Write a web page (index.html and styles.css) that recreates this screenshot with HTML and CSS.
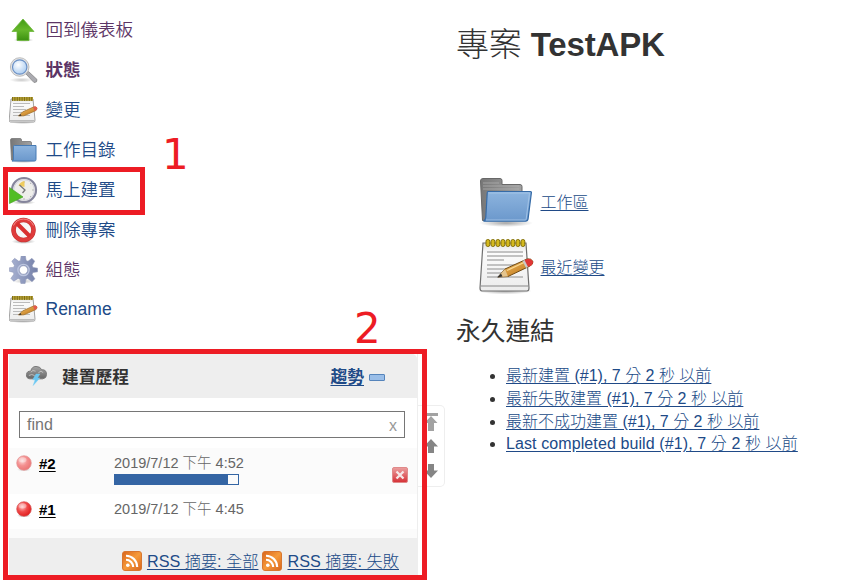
FILE: index.html
```html
<!DOCTYPE html>
<html lang="zh-Hant">
<head>
<meta charset="utf-8">
<title>TestAPK</title>
<link rel="stylesheet" href="styles.css">
</head>
<body>
<svg class="defs" width="0" height="0">
  <defs>
    <linearGradient id="gGreen" x2="0" y2="1"><stop stop-color="#3f9a14"/><stop offset=".5" stop-color="#66b72b"/><stop offset="1" stop-color="#3c9111"/></linearGradient>
    <linearGradient id="gBlue" x2="0" y2="1"><stop stop-color="#8db4de"/><stop offset="1" stop-color="#6b98cc"/></linearGradient>
    <linearGradient id="gGray" x2="1" y2="0"><stop stop-color="#777"/><stop offset="1" stop-color="#a2a2a2"/></linearGradient>
    <linearGradient id="gPaper" x2="0" y2="1"><stop stop-color="#e2e2e2"/><stop offset=".2" stop-color="#fbfbfb"/><stop offset="1" stop-color="#ececec"/></linearGradient>
    <linearGradient id="gPen" x2="1" y2="1"><stop stop-color="#f6c66e"/><stop offset="1" stop-color="#b86c0e"/></linearGradient>
    <linearGradient id="gGear" x2="1" y2="0"><stop stop-color="#a9b3d3"/><stop offset="1" stop-color="#7480a8"/></linearGradient>
    <linearGradient id="gRss" x2="1" y2="1"><stop stop-color="#d9641b"/><stop offset=".5" stop-color="#f59a3a"/><stop offset="1" stop-color="#d9641b"/></linearGradient>
    <linearGradient id="gStop" x2="0" y2="1"><stop stop-color="#eba0a0"/><stop offset="1" stop-color="#d62f35"/></linearGradient>
    <linearGradient id="gCloud" x2="0" y2="1"><stop stop-color="#a5a5a5"/><stop offset="1" stop-color="#666"/></linearGradient>
    <radialGradient id="gLens" cx=".4" cy=".35" r=".7"><stop stop-color="#fff"/><stop offset="1" stop-color="#a8cbf1"/></radialGradient>
    <radialGradient id="gBall" cx=".38" cy=".35" r=".68"><stop stop-color="#ffc4c4"/><stop offset=".5" stop-color="#f04a4a"/><stop offset="1" stop-color="#e01c1c"/></radialGradient>
    <radialGradient id="gShade"><stop stop-color="#000" stop-opacity=".35"/><stop offset="1" stop-color="#000" stop-opacity="0"/></radialGradient>
    <symbol id="folder" viewBox="0 0 56 56">
      <ellipse cx="28" cy="48" rx="27" ry="4" fill="url(#gShade)"/>
      <path d="M2.500 6q0-2.500 2.500-2.500h17q2 0 2 2v4h18q2 0 2 2v34H4.500z" fill="url(#gGray)" stroke="#686868"/>
      <path d="M5 8h16M5 11h36M5 14h36" stroke="#b4b4b4" stroke-width=".7"/>
      <path d="M10 16.500h42.500q1 0 .9 1.200l-3.300 26q-.3 2.500-2.500 2.500H5.500q2-1 2.300-4l1.400-24q0-1.700.8-1.700z" fill="url(#gBlue)" stroke="#366ba7" stroke-width="1.200"/>
      <path d="M10.500 18h41l-3.300 26q-.2 1-1 1H8" fill="none" stroke="#a5c5e8" stroke-width=".9"/>
    </symbol>
    <symbol id="folder-small" viewBox="0 0 28 28">
      <ellipse cx="14" cy="25" rx="14" ry="2" fill="url(#gShade)"/>
      <path d="M1 4q0-1.500 1.500-1.500h8Q12 2.500 12 4v1.500h8.500q1.500 0 1.500 1.500v17H2z" fill="url(#gGray)" stroke="#777" stroke-width=".8"/>
      <path d="M5 9.500h21.500v14q0 1.500-1.500 1.500H2.500q1.500-.5 1.500-2v-12.500q0-1 1-1z" fill="url(#gBlue)" stroke="#477bb5"/>
    </symbol>
    <symbol id="notepad" viewBox="0 0 56 56">
      <ellipse cx="27" cy="53" rx="27" ry="3.500" fill="url(#gShade)"/>
      <path d="M5 5h43l3 45q0 3-2 3H4q-2 0-2-3z" fill="url(#gPaper)" stroke="#6f6f6f" stroke-width="1.200"/>
      <path d="M3 48h47" stroke="#aaa" stroke-width="1.500"/>
      <path d="M9 14h36M9 18h36M9 22h17M9 27h36M9 31h30M9 35h20M9 39h36" stroke="#b0b0b0" stroke-width="1.400"/>
      <g fill="#d4b91e" stroke="#837008"><rect x="8" y="1.500" width="3.800" height="7" rx="1.700"/><rect x="13" y="1.500" width="3.800" height="7" rx="1.700"/><rect x="18" y="1.500" width="3.800" height="7" rx="1.700"/><rect x="23" y="1.500" width="3.800" height="7" rx="1.700"/><rect x="28" y="1.500" width="3.800" height="7" rx="1.700"/><rect x="33" y="1.500" width="3.800" height="7" rx="1.700"/><rect x="38" y="1.500" width="3.800" height="7" rx="1.700"/><rect x="43" y="1.500" width="3.800" height="7" rx="1.700"/></g>
      <path d="M20 39l7-8 22-10q4-1 6 2.500 0 3-3 4.500L30 38.500z" fill="url(#gPen)" stroke="#704b16"/>
      <path d="M29 32.500l18-8.500" stroke="#fbd991" stroke-width="1.200"/>
      <path d="M27 31l3 7.500L20 39z" fill="#e5c58e"/><path d="M23 35.500l1.500 3L19 39.500z" fill="#333"/>
      <path d="M46 22.500l3-1.500q4-1 6 2.500 0 3-3 4.500l-2.500 1z" fill="#df3636"/>
      <path d="M44.500 23l3.500 7 2-1-3.500-7z" fill="#c9c9c9"/>
    </symbol>
    <symbol id="notepad-small" viewBox="0 0 29 28">
      <ellipse cx="14" cy="26" rx="14" ry="2" fill="url(#gShade)"/>
      <path d="M2 3h22l2 21q0 2-1.500 2h-23Q0 26 .2 24z" fill="url(#gPaper)" stroke="#a3a3a3"/>
      <path d="M1 24.500h24" stroke="#bbb"/>
      <path d="M4 7.500h17M4 10.500h11M4 13.500h13M4 16.500h9M4 19.500h17" stroke="#bbb"/>
      <path d="M3.500 1h20.500v3.800H3.500z" fill="#b7a236"/>
      <path d="M3 3h21" stroke="#7f6e18" stroke-width="3.800" stroke-dasharray="1 1.400"/>
      <path d="M9.500 20l4-4 11-5q2.500-.7 3.500 1 0 2-1.500 2.700L15 19.800z" fill="url(#gPen)" stroke="#a3742e" stroke-width=".8"/>
      <path d="M9.500 20l2-2 1 1.800z" fill="#333"/>
      <path d="M24 11l2-.6q2 0 2.300 1.600l-1 2.200-1.800.8z" fill="#e35a4d"/>
    </symbol>
    <symbol id="rss" viewBox="0 0 20 20">
      <rect x=".5" y=".5" width="19" height="19" rx="2.500" fill="url(#gRss)" stroke="#d8762f"/>
      <circle cx="5.800" cy="14.300" r="1.800" fill="#fff"/>
      <path d="M4 8.800a7.200 7.200 0 0 1 7.200 7.200M4 4.800A11.200 11.200 0 0 1 15.200 16" fill="none" stroke="#fff" stroke-width="2.100"/>
    </symbol>
    <symbol id="ball" viewBox="0 0 18 18">
      <ellipse cx="9" cy="15.500" rx="7" ry="2" fill="url(#gShade)"/>
      <circle cx="9" cy="9" r="7.300" fill="url(#gBall)" stroke="#d65555" stroke-width=".7"/>
      <ellipse cx="7.500" cy="5.800" rx="4" ry="2.600" fill="#fff" opacity=".35"/>
    </symbol>
  </defs>
</svg>

<div class="page">
  <aside class="side">
    <nav class="tasks">
      <a class="task visited" href="#"><svg viewBox="0 0 28 28"><ellipse cx="14" cy="24" rx="10" ry="2" fill="url(#gShade)"/><path d="M13.500 3L24.500 15.500H19.500V24.500H7.500V15.500H2.500z" fill="url(#gGreen)" stroke="#6cb83a" stroke-width=".8"/></svg><span>回到儀表板</span></a>
      <a class="task visited current" href="#"><svg viewBox="0 0 28 28"><ellipse cx="12" cy="24" rx="12" ry="2.500" fill="url(#gShade)" opacity=".6"/><path d="M16.500 18l2.500-2.500 8.500 8q.5 3.200-3 3z" fill="#aaaab0" stroke="#888" stroke-width=".8"/><circle cx="10.200" cy="11" r="9.300" fill="#e4e4e4" stroke="#b0b0b0" stroke-width=".8"/><circle cx="10.200" cy="11" r="7.200" fill="url(#gLens)" stroke="#6b91c6" stroke-width="1.200"/></svg><span>狀態</span></a>
      <a class="task" href="#"><svg viewBox="0 0 29 28"><use href="#notepad-small"/></svg><span>變更</span></a>
      <a class="task" href="#"><svg viewBox="0 0 28 28"><use href="#folder-small"/></svg><span>工作目錄</span></a>
      <a class="task" href="#"><svg viewBox="0 0 28 28"><ellipse cx="14" cy="26.500" rx="12" ry="2" fill="url(#gShade)"/><circle cx="14.500" cy="14" r="12" fill="#eeeeea" stroke="#85859c" stroke-width="2.200"/><circle cx="14.500" cy="14" r="10.300" fill="none" stroke="#d4d4e0"/><path d="M14.500 5v2M24.500 14h-2M14.500 24v-2M21.500 7l-1 1M21.500 21l-1-1" stroke="#aaa" stroke-width=".8"/><path d="M9 9.500q2-4 6-4.500v6z" fill="#efcc5d"/><path d="M10 9l5.500 5-2.500 3" fill="none" stroke="#777" stroke-width="1.300"/><path d="M0 11.500l13.500 9.500L0 27.500z" fill="#51bd24" stroke="#4aa526" stroke-width=".7"/></svg><span>馬上建置</span></a>
      <a class="task" href="#"><svg viewBox="0 0 28 28"><ellipse cx="14" cy="25.500" rx="12" ry="2.500" fill="url(#gShade)"/><circle cx="14" cy="14" r="10" fill="#f7f7f7" stroke="#c43636" stroke-width="4.600"/><circle cx="14" cy="14" r="10" fill="none" stroke="#df3c3c" stroke-width="3.400"/><path d="M7.500 7.500l13 13" stroke="#d93030" stroke-width="4"/><path d="M4 9.500a11 11 0 0 1 20 0" fill="none" stroke="#f28b8b"/></svg><span>刪除專案</span></a>
      <a class="task visited" href="#"><svg viewBox="0 0 30 30"><ellipse cx="15" cy="27" rx="12" ry="2.500" fill="url(#gShade)" opacity=".6"/><g fill="url(#gGear)" stroke="#8d97b8" stroke-width=".6"><path fill-rule="evenodd" d="M12.500 0h4.500l.8 4.800 2 .9L24 2.500l3 3-2.700 4.600.8 2.100 4.900.8v4l-4.900.8-.9 2.100 3 4.600-3 3-4.700-3.400-2 .9-.8 4.500h-4.500l-.8-4.500-2.200-.9L4.500 27l-3-3 3.300-4.600-.9-2.100L0 16.500v-4l4.400-.3.9-2.100L2.500 5.500l3-3L10 5.700l1.700-.9zM15 10.500a4.500 4.500 0 1 0 .01 0z"/></g><circle cx="15" cy="15" r="6" fill="none" stroke="#bcc5df" stroke-width="1.500"/></svg><span>組態</span></a>
      <a class="task" href="#"><svg viewBox="0 0 29 28"><use href="#notepad-small"/></svg><span>Rename</span></a>
    </nav>

    <section class="history">
      <header class="history-head">
        <svg class="storm" viewBox="0 0 24 22"><path d="M5 14.500Q1 14 1.500 10T6 6.500Q7 1.500 11.500 1.500T17.500 5q5-.5 5 5 0 4-4 4.500z" fill="url(#gCloud)" stroke="#777"/><path d="M6 7.500q2-3 5-1M14 8q3-3 5 0M4 11q3-2 6 0" fill="none" stroke="#c0c0c0"/><path d="M11.500 9.500h4L13 13.500h2.500L8.500 21.500l2-6H8z" fill="#69c6f2" stroke="#7fd0f5" stroke-width=".5"/></svg>
        <h3>建置歷程</h3>
        <a class="trend" href="#">趨勢</a>
        <i class="collapse"></i>
      </header>
      <div class="search"><span>find</span><span class="clear">x</span></div>
      <div class="build running">
        <svg class="ball"><use href="#ball"/></svg>
        <a class="num" href="#">#2</a>
        <div class="when"><span>2019/7/12 下午 4:52</span><div class="progress"><i></i></div></div>
        <svg class="stop" viewBox="0 0 16 16"><rect x=".5" y=".5" width="15" height="15" rx="1.500" fill="url(#gStop)" stroke="#e08a8a"/><path d="M4.500 4.500l7 7M11.500 4.500l-7 7" stroke="#f6e8e8" stroke-width="2.300"/></svg>
      </div>
      <div class="build done">
        <svg class="ball"><use href="#ball"/></svg>
        <a class="num" href="#">#1</a>
        <div class="when"><span>2019/7/12 下午 4:45</span></div>
      </div>
      <footer class="feeds">
        <svg><use href="#rss"/></svg><a href="#">RSS 摘要: 全部</a>
        <svg><use href="#rss"/></svg><a href="#">RSS 摘要: 失敗</a>
      </footer>
    </section>
  </aside>

  <div class="pager">
    <svg viewBox="0 0 16 18"><path d="M1 0h14v3H1zM8 3l6.500 7H11v8H5v-8H1.500z" fill="#a2a2a2"/></svg>
    <svg viewBox="0 0 16 18"><path d="M8 1l7 7.500h-4V15H5V8.500H1z" fill="#858585"/></svg>
    <svg viewBox="0 0 16 18"><path d="M8 15L1 7.500h4V1h6v6.500h4z" fill="#858585"/></svg>
  </div>

  <main class="main">
    <h1><span>專案</span> TestAPK</h1>
    <div class="shortcuts">
      <a href="#"><svg viewBox="0 0 56 56"><use href="#folder"/></svg><span>工作區</span></a>
      <a href="#"><svg viewBox="0 0 56 56"><use href="#notepad"/></svg><span>最近變更</span></a>
    </div>
    <h2>永久連結</h2>
    <ul>
      <li><a href="#">最新建置 (#1), 7 分 2 秒 以前</a></li>
      <li><a href="#">最新失敗建置 (#1), 7 分 2 秒 以前</a></li>
      <li><a href="#">最新不成功建置 (#1), 7 分 2 秒 以前</a></li>
      <li class="completed"><a href="#">Last completed build (#1), 7 分 2 秒 以前</a></li>
    </ul>
  </main>
</div>

<div class="mark mark-build"></div>
<div class="mark mark-history"></div>
<div class="step step-one">1</div>
<div class="step step-two">2</div>
</body>
</html>
```
FILE: styles.css
```css
* { box-sizing: border-box; }
body {
  margin: 0;
  width: 867px;
  height: 581px;
  overflow: hidden;
  position: relative;
  background: #fff;
  color: #333;
  font: 16px/22px "Liberation Sans", "Noto Sans CJK TC", sans-serif;
}
h1, h2, h3, ul { margin: 0; padding: 0; }
svg { display: block; flex: none; }
.defs { position: absolute; }
a { color: #204a87; text-underline-offset: 2px; }

.page { display: flex; height: 581px; }
.side { width: 409px; margin-left: 9px; flex: none; padding-top: 10px; }

.tasks { height: 344px; }
.task {
  display: flex;
  align-items: center;
  height: 40px;
  gap: 8px;
  font-size: 17.500px;
  font-weight: 350;
  text-decoration: none;
}
.task svg { width: 29px; height: 28px; margin-left: -.5px; }
.task:last-child { height: 38px; }
.visited { color: #5c3566; }
.current { font-weight: 700; }

.history { height: 224px; border-right: 1px solid #eee; background: #fff; display: flex; flex-direction: column; }
.history-head {
  display: flex;
  align-items: center;
  height: 44px;
  padding: 2px 32px 0 16px;
  background: #eee;
  border-radius: 0 5px 0 0;
}
.storm { width: 23px; height: 21px; margin-bottom: 3px; }
h3 { margin-left: 14px; font-size: 16.800px; color: #333; flex: 1; padding-top: 1px; }
.trend { font-weight: 700; font-size: 16.800px; padding-top: 1px; }
.collapse { width: 16px; height: 7px; margin-left: 5px; border: 1px solid #5584bb; border-radius: 1px; background: #9abee8; }
.search {
  display: flex;
  justify-content: space-between;
  align-items: center;
  height: 27px;
  margin: 13px 12px 10px 10px;
  padding: 0 7px;
  border: 1px solid #767676;
  color: #757575;
}
.clear { color: #999; padding-top: 2px; }
.build { display: flex; align-items: flex-start; padding: 4px 9px 0 6px; color: #666; }
.running { height: 46px; background: #fbfbfb; }
.done { height: 44px; border-bottom: 9px solid #fbfbfb; }
.ball { width: 18px; height: 18px; margin-top: 2px; }
.running .ball { opacity: .6; }
.num { width: 75px; margin-left: 6px; color: #000; font-weight: 700; font-size: 15px; padding-top: 1px; }
.when { flex: 1; font-weight: 300; font-size: 14.500px; }
.when span { display: block; height: 22px; white-space: nowrap; }
.progress { width: 125px; height: 11px; border: 1px solid #3465a4; }
.progress i { display: block; width: 113px; height: 9px; background: #3465a4; }
.stop { width: 16px; height: 16px; margin-top: 15px; }
.feeds {
  display: flex;
  align-items: center;
  justify-content: flex-end;
  height: 40px;
  padding: 5px 18px 0 0;
  background: #eee;
  font-size: 16.200px;
  font-weight: 300;
  white-space: nowrap;
}
.feeds svg { width: 20px; height: 20px; margin: 0 5px 0 4px; }

.pager {
  width: 27px;
  height: 82px;
  margin-top: 405px;
  border: 1px solid #eee;
  border-left: 0;
  border-radius: 0 5px 5px 0;
  display: flex;
  flex-direction: column;
  align-items: center;
  gap: 7px;
  padding-top: 7px;
  flex: none;
}
.pager svg { width: 16px; height: 18px; }

.main { margin-left: 11px; flex: 1; }
h1 { height: 170px; padding-top: 23px; font-size: 33px; line-height: 44px; color: #333; }
h1 { letter-spacing: -.15px; }
h1 span { font-weight: 300; }
.shortcuts a { display: flex; align-items: center; gap: 7px; height: 65px; padding-left: 21.500px; font-weight: 300; }
.shortcuts svg { width: 56px; height: 56px; }
.shortcuts a:last-child svg { margin-top: -3px; }
h2 { margin-top: 15px; font-size: 24.700px; font-weight: 400; line-height: 34px; color: #333; }
ul { margin-top: 16px; padding-left: 50px; }
li { height: 23px; line-height: 22px; font-weight: 300; }
.completed { margin-top: -1px; letter-spacing: .1px; }

.mark { position: absolute; border: 5px solid #ed1c24; }
.mark-build { left: 3px; top: 167px; width: 142px; height: 48px; }
.mark-history { left: 3px; top: 349px; width: 424px; height: 231px; }
.step { position: absolute; font: 42px/42px "DejaVu Sans", sans-serif; color: #ed1c24; }
.step-one { left: 162px; top: 134px; }
.step-two { left: 354px; top: 308px; }
```
